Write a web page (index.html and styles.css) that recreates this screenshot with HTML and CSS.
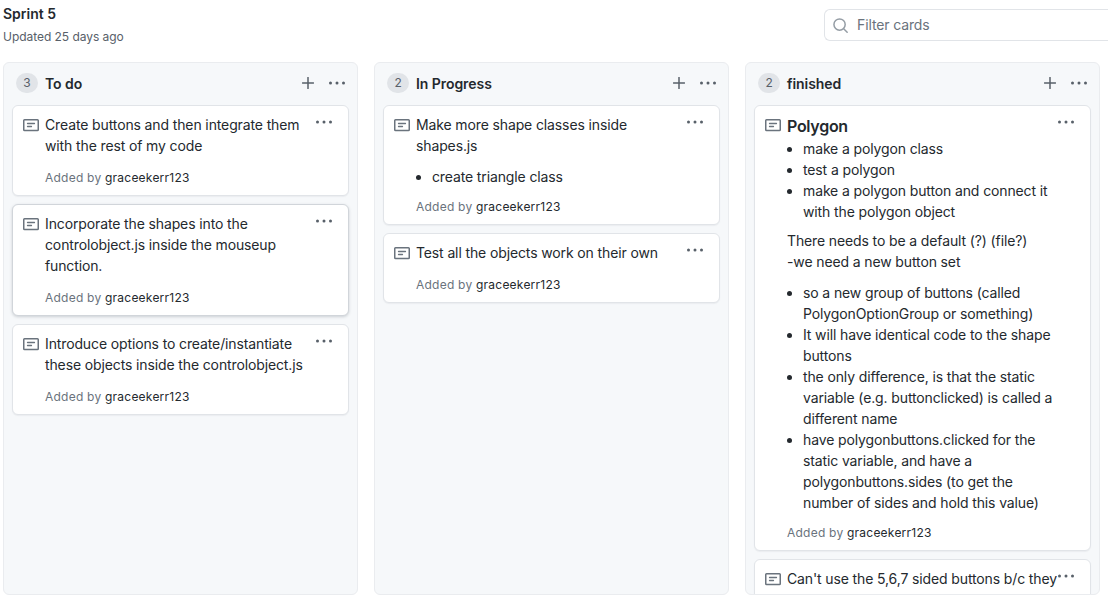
FILE: index.html
```html
<!DOCTYPE html>
<html lang="en">
<head>
<meta charset="utf-8">
<title>Sprint 5</title>
<link rel="stylesheet" href="styles.css">
</head>
<body>
<svg class="sprite" aria-hidden="true">
  <symbol id="note" viewBox="0 0 16 16"><rect x=".75" y="2.75" width="14.5" height="10.8" rx=".8" fill="none" stroke="currentColor" stroke-width="1.5"/><path d="M4.5 6.5h7M4.5 9.5h4" fill="none" stroke="currentColor" stroke-width="1.3" stroke-linecap="round"/></symbol>
  <symbol id="dots" viewBox="0 0 18 6"><circle cx="2.5" cy="3" r="1.5"/><circle cx="9" cy="3" r="1.5"/><circle cx="15.5" cy="3" r="1.5"/></symbol>
  <symbol id="plus" viewBox="0 0 12 12"><path d="M6 .5v11M.5 6h11" fill="none" stroke="currentColor" stroke-width="1.5" stroke-linecap="round"/></symbol>
</svg>
<header class="top">
  <div>
    <h1 class="title">Sprint 5</h1>
    <div class="updated">Updated 25 days ago</div>
  </div>
  <div class="filter">
    <svg class="search" viewBox="0 0 16 16"><circle cx="7" cy="7" r="6"/><path d="M11.4 11.4l3.7 3.7"/></svg>
    <span>Filter cards</span>
  </div>
</header>
<main class="board">
  <section class="column">
    <div class="column-head"><span class="count">3</span><h2 class="name">To do</h2><svg class="plus"><use href="#plus"/></svg><svg class="dots"><use href="#dots"/></svg></div>
    <article class="card">
      <svg class="note"><use href="#note"/></svg>
      <div class="body"><p>Create buttons and then integrate them<br>with the rest of my code</p><div class="meta">Added by <b>graceekerr123</b></div></div>
      <svg class="dots"><use href="#dots"/></svg>
    </article>
    <article class="card raised">
      <svg class="note"><use href="#note"/></svg>
      <div class="body"><p>Incorporate the shapes into the<br>controlobject.js inside the mouseup<br>function.</p><div class="meta">Added by <b>graceekerr123</b></div></div>
      <svg class="dots"><use href="#dots"/></svg>
    </article>
    <article class="card">
      <svg class="note"><use href="#note"/></svg>
      <div class="body"><p>Introduce options to create/instantiate<br>these objects inside the controlobject.js</p><div class="meta">Added by <b>graceekerr123</b></div></div>
      <svg class="dots"><use href="#dots"/></svg>
    </article>
  </section>
  <section class="column">
    <div class="column-head"><span class="count">2</span><h2 class="name">In Progress</h2><svg class="plus"><use href="#plus"/></svg><svg class="dots"><use href="#dots"/></svg></div>
    <article class="card">
      <svg class="note"><use href="#note"/></svg>
      <div class="body"><p>Make more shape classes inside<br>shapes.js</p><ul><li>create triangle class</li></ul><div class="meta">Added by <b>graceekerr123</b></div></div>
      <svg class="dots"><use href="#dots"/></svg>
    </article>
    <article class="card">
      <svg class="note"><use href="#note"/></svg>
      <div class="body"><p>Test all the objects work on their own</p><div class="meta">Added by <b>graceekerr123</b></div></div>
      <svg class="dots"><use href="#dots"/></svg>
    </article>
  </section>
  <section class="column">
    <div class="column-head"><span class="count">2</span><h2 class="name">finished</h2><svg class="plus"><use href="#plus"/></svg><svg class="dots"><use href="#dots"/></svg></div>
    <article class="card">
      <svg class="note"><use href="#note"/></svg>
      <div class="body">
        <h3>Polygon</h3>
        <ul><li>make a polygon class</li><li>test a polygon</li><li>make a polygon button and connect it<br>with the polygon object</li></ul>
        <p>There needs to be a default (?) (file?)<br>-we need a new button set</p>
        <ul><li>so a new group of buttons (called<br>PolygonOptionGroup or something)</li><li>It will have identical code to the shape<br>buttons</li><li>the only difference, is that the static<br>variable (e.g. buttonclicked) is called a<br>different name</li><li>have polygonbuttons.clicked for the<br>static variable, and have a<br>polygonbuttons.sides (to get the<br>number of sides and hold this value)</li></ul>
        <div class="meta">Added by <b>graceekerr123</b></div>
      </div>
      <svg class="dots"><use href="#dots"/></svg>
    </article>
    <article class="card tall">
      <svg class="note"><use href="#note"/></svg>
      <div class="body"><p>Can't use the 5,6,7 sided buttons b/c they</p></div>
      <svg class="dots"><use href="#dots"/></svg>
    </article>
  </section>
</main>
</body>
</html>
```
FILE: styles.css
```css
* { box-sizing: border-box; }
body {
  margin: 0;
  height: 598px;
  overflow: hidden;
  background: #fff;
  color: #24292e;
  font: 14px/21px Inter, "Liberation Sans", sans-serif;
  letter-spacing: -.125px;
}
h1, h2, h3, p, ul { margin: 0; padding: 0; }
svg { display: block; flex: none; }
.sprite { display: none; }
.top { display: flex; height: 62px; padding: 3px 0 0 3px; white-space: nowrap; }
.title { font-size: 14px; line-height: 21px; font-weight: 600; letter-spacing: 0; }
.updated { margin-top: 4px; font-size: 12px; line-height: 18px; letter-spacing: -.04px; color: #586069; }
.filter {
  display: flex;
  align-items: center;
  width: 284px;
  height: 32px;
  margin: 6px 0 0 auto;
  padding: 0 0 2px 8px;
  gap: 9px;
  border: 1px solid #e1e4e8;
  border-right: 0;
  border-radius: 6px 0 0 6px;
  color: #6a737d;
}
.search { width: 15px; height: 15px; margin-top: 3px; fill: none; stroke: #959da5; stroke-width: 1.6; stroke-linecap: round; }
.board { display: flex; gap: 16px; height: 533px; padding-left: 3px; }
.column {
  flex: none;
  width: 355px;
  padding: 0 8px;
  overflow: hidden;
  border: 1px solid #eaecef;
  border-radius: 6px;
  background: #f6f8fa;
}
.column-head { display: flex; align-items: center; height: 42px; padding: 0 3px 2px 4px; color: #586069; }
.count {
  width: 22px;
  height: 20px;
  border-radius: 10px;
  background: #e1e4e8;
  font-size: 12px;
  line-height: 20px;
  text-align: center;
}
.name { margin: 0 auto 0 7px; font-size: 14px; line-height: 21px; font-weight: 600; letter-spacing: -.06px; color: #24292e; }
.plus { width: 12px; height: 12px; margin-right: 14px; }
.dots { width: 18px; height: 6px; fill: #586069; }
.card {
  display: flex;
  margin-bottom: 8px;
  padding: 8px 15px 8px 10px;
  border: 1px solid #e1e4e8;
  border-radius: 6px;
  background: #fff;
  box-shadow: 0 1px 1px rgba(149, 157, 165, .12);
}
.raised { border-color: #d1d5da; box-shadow: 0 1px 3px rgba(106, 115, 125, .3); }
.tall { min-height: 91px; }
.card .dots { margin-top: 4.5px; }
.note { width: 16px; height: 16px; margin: 3px 6px 0 0; color: #6a737d; }
.body { flex: 1; min-width: 0; white-space: nowrap; }
.body h3 { padding-top: 1px; font-size: 16px; line-height: 22px; margin-bottom: 1px; font-weight: 600; letter-spacing: -.3px; }
.body ul { padding-left: 16px; }
.body ul + p { margin-top: 8px; }
.body p + ul { margin-top: 10px; }
.meta { margin-top: 13px; font-size: 12px; line-height: 18px; letter-spacing: .23px; color: #6a737d; }
.body ul + .meta { margin-top: 11px; }
.meta b { font-weight: 400; color: #24292e; }
```
